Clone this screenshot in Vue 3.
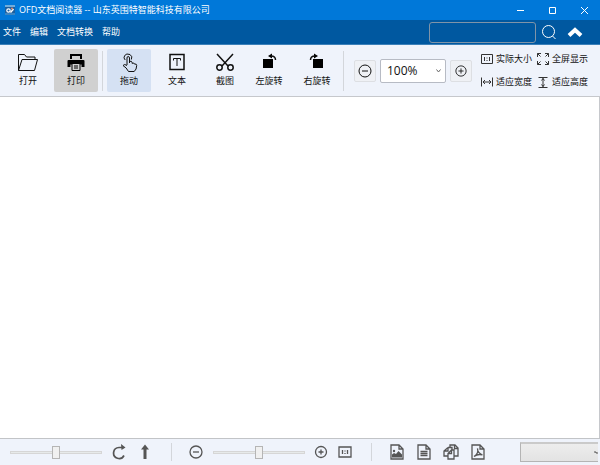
<script setup>
import { ref } from 'vue'

const menus = ['文件', '编辑', '文档转换', '帮助']
const tools = [
  { id: 'open', label: '打开' },
  { id: 'print', label: '打印', state: 'hovered' },
  { id: 'drag', label: '拖动', state: 'active', divided: true },
  { id: 'text', label: '文本' },
  { id: 'cut', label: '截图' },
  { id: 'left', label: '左旋转', state: 'joined' },
  { id: 'right', label: '右旋转' }
]
const fits = [
  { id: 'actual', label: '实际大小' },
  { id: 'full', label: '全屏显示' },
  { id: 'width', label: '适应宽度' },
  { id: 'height', label: '适应高度' }
]
const exportsList = [
  { id: 'image', label: '导出图片' },
  { id: 'doc', label: '导出文本' },
  { id: 'copies', label: '复制' },
  { id: 'pdf', label: '导出PDF' }
]
const query = ref('')
const zoom = ref('100%')
const angle = ref(50)
const scale = ref(50)
</script>

<template>
  <div class="app">
    <header class="titlebar">
      <svg class="logo" viewBox="0 0 12 12">
        <rect x="1" y="1" width="10" height="10" rx="1" fill="#1c5f9e" />
        <path d="M1 2h10" stroke="#8fc6ee" stroke-width="1.500" />
        <path d="M1 10h10" stroke="#5aa9e0" />
        <circle cx="4.500" cy="6.500" r="1.700" fill="none" stroke="#fff" stroke-width="1.200" />
        <path d="M6.500 8.500L9.500 5" stroke="#fff" stroke-width="1.400" />
        <circle cx="8" cy="4.500" r="1" fill="#e58a6c" />
      </svg>
      <h1>OFD文档阅读器 -- 山东英围特智能科技有限公司</h1>
      <div class="window-buttons">
        <button aria-label="最小化"><svg viewBox="0 0 9 9"><path d="M1 4.500h7" /></svg></button>
        <button aria-label="最大化"><svg viewBox="0 0 9 9"><path d="M1.500 1.500h6v6h-6z" /></svg></button>
        <button aria-label="关闭"><svg viewBox="0 0 9 9"><path d="M1 1l7 7M8 1l-7 7" /></svg></button>
      </div>
    </header>

    <nav class="menubar">
      <button v-for="m in menus" :key="m" class="menu">{{ m }}</button>
      <input v-model="query" class="search" type="text" aria-label="搜索" />
      <button class="find" aria-label="查找">
        <svg viewBox="0 0 16 16"><circle cx="7.500" cy="7.500" r="6" /><path d="M11.500 12l3 3" /></svg>
      </button>
      <button class="collapse" aria-label="收起">
        <svg viewBox="0 0 16 10"><path d="M2 8.500l6-5.500 6 5.500" /></svg>
      </button>
    </nav>

    <section class="toolbar">
      <template v-for="t in tools" :key="t.id">
        <span v-if="t.divided" class="divider"></span>
        <button class="tool" :class="t.state">
          <svg v-if="t.id === 'open'" viewBox="0 0 20 20">
            <path d="M.5 17.500v-16h6l2 2.500h8.500v3M.5 17.500L4 6.500h15.500l-3 11z" />
          </svg>
          <svg v-else-if="t.id === 'print'" viewBox="0 0 20 20">
            <path class="solid" d="M4 1h12v5H4zM2.500 7h15q1 0 1 1v6h-3v-2.500h-11V14h-3V8q0-1 1-1z" />
            <path class="paper" d="M6 3h8v3H6z" />
            <path class="paper-line" d="M6 10.500h8v7H6zM8 13h4M8 15h4" />
          </svg>
          <svg v-else-if="t.id === 'drag'" viewBox="0 0 20 20">
            <path d="M8 12V5q0-1.500 1.200-1.500T10.500 5v5V8.500q2.200-1 2.500 .8v1q2.200-1 2.500 .8 2.200-.6 2.200 1.400 0 4-2.500 6H9.500Q7.500 14.500 4 12.500q1.500-2 4 0M6.200 7Q4 5 5.700 2.500T11 1.500Q14 3.500 12.300 6.500" />
          </svg>
          <svg v-else-if="t.id === 'text'" viewBox="0 0 20 20">
            <path class="thick" d="M3 1.500h14v15H3z" />
            <path d="M6.500 7.500V5.500h7v2M10 5.500v7.500" />
          </svg>
          <svg v-else-if="t.id === 'cut'" viewBox="0 0 20 20">
            <path class="thick" d="M2 1l11 12M18 1L7 13" />
            <circle class="thick" cx="4.500" cy="14.500" r="2.700" /><circle class="thick" cx="15.500" cy="14.500" r="2.700" />
          </svg>
          <svg v-else-if="t.id === 'left'" viewBox="0 0 20 20">
            <path class="solid" d="M4 6h10v9H4zM9 3l4-2.500v5z" />
            <path class="thick" d="M12 3q4.500 0 4.500 4" />
          </svg>
          <svg v-else viewBox="0 0 20 20">
            <path class="solid" d="M6 6h10v9H6zM11 3L7 .5v5z" />
            <path class="thick" d="M8 3Q3.500 3 3.500 7" />
          </svg>
          <span>{{ t.label }}</span>
        </button>
      </template>
      <span class="divider"></span>

      <div class="zoom">
        <button class="step" aria-label="缩小">
          <svg viewBox="0 0 14 14"><circle cx="7" cy="7" r="6" /><path d="M4 7h6" /></svg>
        </button>
        <div class="select-wrap">
          <select v-model="zoom" aria-label="缩放比例">
            <option>50%</option>
            <option>100%</option>
            <option>200%</option>
          </select>
          <svg viewBox="0 0 5 4"><path d="M.5 .5l2 2.500 2-2.500" /></svg>
        </div>
        <button class="step small" aria-label="放大">
          <svg viewBox="0 0 14 14"><circle cx="7" cy="7" r="6" /><path d="M4 7h6M7 4v6" /></svg>
        </button>
      </div>

      <div class="fits">
        <button v-for="f in fits" :key="f.id" class="fit">
          <svg v-if="f.id === 'actual'" viewBox="0 0 14 14">
            <path d="M1.500 2.500h11v9h-11zM4.500 5v4M9.500 5v4M7 5.500v1M7 8v1" />
          </svg>
          <svg v-else-if="f.id === 'full'" viewBox="0 0 14 14">
            <path d="M1.500 5V1.500H5M1.500 1.500L4.500 4.500M9 1.500h3.500V5M12.500 1.500L9.500 4.500M1.500 9v3.500H5M1.500 12.500L4.500 9.500M9 12.500h3.500V9M12.500 12.500L9.500 9.500" />
          </svg>
          <svg v-else-if="f.id === 'width'" viewBox="0 0 14 14">
            <path d="M1.500 2.500v9M12.500 2.500v9M3 7h8M5 5L3 7l2 2M9 5l2 2-2 2" />
          </svg>
          <svg v-else viewBox="0 0 14 14">
            <path d="M2.500 2.500h9M2.500 12.500h9M7 3v9M5.500 5.500L7 3.500l1.500 2M5.500 9.500l1.500 2 1.500-2" />
          </svg>
          <span>{{ f.label }}</span>
        </button>
      </div>
    </section>

    <main class="page"></main>

    <footer class="statusbar">
      <input v-model="angle" class="slider" type="range" aria-label="旋转角度" />
      <button class="icon rotate" aria-label="旋转">
        <svg viewBox="0 0 16 16"><path class="bold" d="M12 3.500H8A5.500 5.500 0 1 0 13 11.500" /><path class="fill" d="M10 0l4.500 3.500L10.500 6z" /></svg>
      </button>
      <button class="icon reset" aria-label="复位">
        <svg viewBox="0 0 16 16"><path class="fill" d="M8 .5l4 5H9.500V15h-3V5.500H4z" /></svg>
      </button>
      <span class="divider"></span>
      <button class="icon minus" aria-label="缩小视图">
        <svg viewBox="0 0 16 16"><circle cx="8" cy="8" r="6" /><path d="M5 8h6" /></svg>
      </button>
      <input v-model="scale" class="slider" type="range" aria-label="视图比例" />
      <button class="icon plus" aria-label="放大视图">
        <svg viewBox="0 0 16 16"><circle cx="8" cy="8" r="5.500" /><path d="M5.500 8h5M8 5.500v5" /></svg>
      </button>
      <button class="icon" aria-label="原始大小">
        <svg viewBox="0 0 16 16"><path d="M2 3h12v10H2zM5.500 6v4M10.500 6v4M8 6.500v1M8 9v1" /></svg>
      </button>
      <span class="divider"></span>
      <div class="exports">
        <button v-for="e in exportsList" :key="e.id" class="icon" :aria-label="e.label">
          <svg viewBox="0 0 16 16">
            <path v-if="e.id !== 'copies'" d="M2 1h8l4 4v10H2zM10 1v4h4" />
            <template v-if="e.id === 'image'">
              <path class="fill" d="M3 13.500v-3l2-1.500 2 1 2.500-3 3.500 3.500v3z" /><circle class="fill" cx="5" cy="7" r="1.200" />
            </template>
            <path v-else-if="e.id === 'doc'" d="M4.500 7.500h7M4.500 9.500h7M4.500 11.500h7" />
            <path v-else-if="e.id === 'copies'" d="M7 4V1h5l3 3v8h-4M11.500 1v3.500H15M5 3.500L1 7v5h4M5 3.500h4V6M5 3.500V7H1M8.500 6H11v9H5V9.500zM8.500 6v3.500H5" />
            <path v-else d="M4 12.500q5-3 3.500-8Q7.500 9 12.500 11 8 9.500 4 12.500" />
          </svg>
        </button>
      </div>
      <button class="progress" aria-label="状态">
        <svg viewBox="0 0 4 4"><path d="M0 1h2v1h2" /></svg>
      </button>
    </footer>
  </div>
</template>

<style>
body {
  margin: 0;
}
</style>

<style scoped>
.app {
  display: flex;
  flex-direction: column;
  min-height: 100vh;
  overflow: hidden;
  background: #eff3fb;
  color: #111;
  font-family: "Noto Sans", "Noto Sans CJK SC", sans-serif;
  font-size: 9px;
  line-height: 12px;
}
* {
  box-sizing: border-box;
}
button {
  display: flex;
  flex: none;
  align-items: center;
  justify-content: center;
  padding: 0;
  border: 0;
  background: none;
  color: inherit;
  font: inherit;
}
svg {
  display: block;
  flex: none;
  fill: none;
  stroke: currentColor;
  stroke-width: 1;
}
.titlebar {
  display: flex;
  align-items: center;
  height: 20px;
  padding-left: 4px;
  background: #0078d9;
  color: #fff;
}
.logo {
  width: 12px;
  height: 12px;
  stroke: none;
}
h1 {
  margin: 0 0 0 3px;
  font-family: "Open Sans", "Noto Sans CJK SC", sans-serif;
  font-size: 9px;
  font-weight: 400;
  white-space: nowrap;
}
.window-buttons {
  display: flex;
  margin-left: auto;
}
.window-buttons button {
  width: 32px;
  height: 20px;
}
.window-buttons svg {
  width: 9px;
  height: 9px;
}
.menubar {
  display: flex;
  align-items: center;
  height: 25px;
  padding: 0 17px 0 3px;
  gap: 9px;
  border-bottom: 1px solid #3b80b9;
  background: #0058a0;
  color: #fff;
}
.search {
  width: 107px;
  height: 21px;
  margin-left: auto;
  padding: 0 4px;
  border: 1px solid #8094a8;
  border-radius: 3px;
  background: transparent;
  color: #fff;
  font: inherit;
}
.find {
  margin-left: -4px;
}
.find svg {
  width: 16px;
  height: 16px;
}
.collapse {
  margin-left: 1px;
}
.collapse svg {
  width: 16px;
  height: 10px;
  stroke-width: 4;
}
.toolbar {
  display: flex;
  align-items: center;
  height: 52px;
  padding: 0 6px;
  gap: 4px;
  border-bottom: 1px solid #c6c8cc;
}
.tool {
  flex-direction: column;
  gap: 2px;
  width: 44px;
  height: 43px;
  padding-bottom: 2px;
  border-radius: 2px;
}
.tool svg {
  width: 20px;
  height: 20px;
}
.hovered {
  background: #d0d0d0;
}
.active {
  background: #d5e1f3;
}
.joined {
  margin-left: -4px;
}
.divider {
  flex: none;
  width: 1px;
  height: 40px;
  background: #d3d6db;
}
.solid {
  fill: #000;
  stroke: none;
}
.paper {
  fill: #d0d0d0;
  stroke: none;
}
.paper-line {
  fill: #d0d0d0;
  stroke: #000;
}
.thick {
  stroke-width: 1.5;
}
.zoom {
  display: flex;
  flex: none;
  align-items: center;
  gap: 4px;
  margin-left: 6px;
}
.step {
  width: 22px;
  height: 22px;
  border: 1px solid #dddfe3;
  border-radius: 2px;
  background: #eff1f5;
}
.step svg {
  width: 14px;
  height: 14px;
}
.step.small svg {
  width: 12px;
  height: 12px;
}
.select-wrap {
  position: relative;
}
select {
  display: block;
  width: 66px;
  height: 24px;
  padding: 0 6px;
  appearance: none;
  border: 1px solid #b7bbc4;
  border-radius: 2px;
  background: #fff;
  color: #111;
  font-family: "Open Sans", sans-serif;
  font-size: 12px;
}
.select-wrap svg {
  position: absolute;
  top: 10px;
  right: 5px;
  width: 5px;
  height: 4px;
  color: #666;
}
.fits {
  display: grid;
  flex: none;
  grid-template-columns: auto auto;
  gap: 9px 4px;
  margin-left: 4px;
}
.fit {
  gap: 2px;
  height: 14px;
}
.fit svg {
  width: 14px;
  height: 14px;
  color: #333;
}
.page {
  flex: 1;
  border-right: 1px solid #c6c8cc;
  background: #fff;
}
.statusbar {
  display: flex;
  align-items: center;
  height: 27px;
  padding-left: 10px;
  border-top: 1px solid #c2c4c7;
  color: #555;
}
.statusbar .divider {
  height: 18px;
}
.slider {
  flex: none;
  width: 92px;
  height: 14px;
  margin: 0;
  appearance: none;
  background: none;
}
.slider::-webkit-slider-runnable-track {
  height: 3px;
  border: 1px solid #d6d6d6;
  background: #e7eaea;
}
.slider::-webkit-slider-thumb {
  width: 8px;
  height: 13px;
  margin-top: -6px;
  appearance: none;
  border: 1px solid #b5b5b5;
  background: #f0f0f0;
}
.icon {
  width: 16px;
  height: 16px;
}
.icon svg {
  width: 16px;
  height: 16px;
  stroke-width: 1.3;
}
.icon .bold {
  stroke-width: 1.7;
}
.fill {
  fill: currentColor;
  stroke: none;
}
.rotate {
  margin-left: 9px;
}
.reset {
  margin: 0 18px 0 10px;
}
.minus {
  margin: 0 9px 0 16px;
}
.plus {
  margin: 0 8px;
}
.icon + .divider {
  margin-right: 17px;
}
.reset + .divider {
  margin-right: 0;
}
.plus + .icon {
  margin-right: 18px;
}
.exports {
  display: flex;
  gap: 11px;
}
.progress {
  flex: 1;
  justify-content: flex-end;
  height: 20px;
  margin: 0 2px 0 34px;
  border: 1px solid #b4b4b4;
  border-top: 2px solid #cacaca;
  border-right: 0;
  background: linear-gradient(#ededed, #e3e3e3);
}
.progress svg {
  width: 4px;
  height: 4px;
}
</style>
